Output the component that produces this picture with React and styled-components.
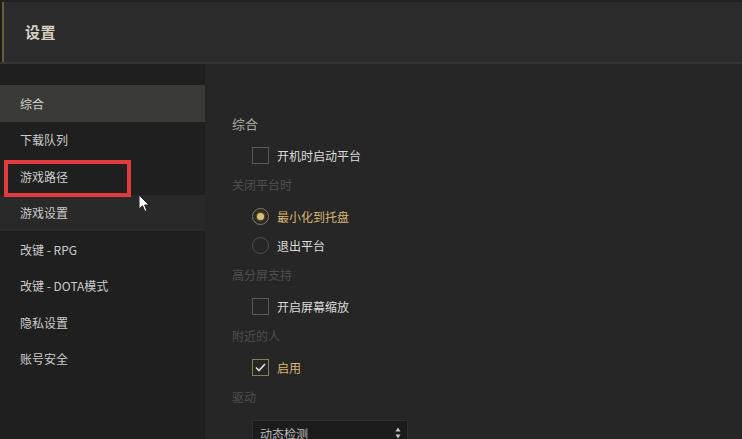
import React from "react";
import styled, { createGlobalStyle, css } from "styled-components";

const Global = createGlobalStyle`
  html, body { margin: 0; padding: 0; background: #262626; }
  body { font-family: "Noto Sans CJK SC", "Noto Sans", sans-serif; }
  * { box-sizing: border-box; }
`;

const Window = styled.div`
  position: relative;
  width: 742px;
  height: 439px;
  overflow: hidden;
  display: flex;
  flex-direction: column;
  background: #262626;
`;

const Header = styled.header`
  height: 64px;
  flex: none;
  display: flex;
  align-items: center;
  padding-left: 25px;
  padding-bottom: 2px;
  background: #2c2c2c;
  border-top: 2px solid #222;
  border-bottom: 2px solid #363636;
  box-shadow: inset 2px 0 #1c1c1c, inset 4px 0 #6b5a3b;
`;

const Title = styled.h1`
  margin: 0;
  font-size: 15px;
  font-weight: 700;
  color: #d6d0c2;
  letter-spacing: 0.5px;
`;

const Body = styled.div`
  flex: 1;
  display: flex;
  min-height: 0;
`;

const Sidebar = styled.nav`
  width: 205px;
  flex: none;
  background: #1f1f1f;
  padding-top: 21px;
  display: flex;
  flex-direction: column;
`;

const NavItem = styled.div`
  height: 36.5px;
  flex: none;
  display: flex;
  align-items: center;
  padding-left: 20px;
  font-size: 12px;
  color: #cbcbcb;
  ${(p) =>
    p.$active &&
    css`
      background: #3a3a36;
      color: #d2d2cc;
    `}
  ${(p) =>
    p.$hover &&
    css`
      background: #292929;
    `}
`;

const Main = styled.section`
  flex: 1;
  padding: 45px 0 0 27px;
  display: flex;
  flex-direction: column;
  overflow: hidden;
`;

const Heading = styled.div`
  height: 28px;
  flex: none;
  margin-bottom: 4px;
  display: flex;
  align-items: center;
  font-size: 13px;
  color: #b0aca4;
`;

const SectionLabel = styled.div`
  height: 28px;
  flex: none;
  margin-bottom: 4px;
  display: flex;
  align-items: center;
  font-size: 12px;
  color: #4f4f4f;
`;

const Option = styled.div`
  height: 29px;
  flex: none;
  display: flex;
  align-items: center;
  gap: 8px;
  padding-left: 20px;
  font-size: 12px;
  color: ${(p) => (p.$on ? "#d9b672" : "#dcdcdc")};
`;

const Box = styled.span`
  width: 17px;
  height: 17px;
  border: 1.5px solid ${(p) => (p.$on ? "#8c7c58" : "#595959")};
  display: flex;
  align-items: center;
  justify-content: center;
`;

const Radio = styled.span`
  width: 17px;
  height: 17px;
  border-radius: 50%;
  border: 1.5px solid ${(p) => (p.$on ? "#8c7c58" : "#4e4e4e")};
  display: flex;
  align-items: center;
  justify-content: center;
  &::after {
    content: "";
    width: 7px;
    height: 7px;
    border-radius: 50%;
    background: ${(p) => (p.$on ? "#e0bd70" : "transparent")};
    box-shadow: ${(p) => (p.$on ? "0 0 3px #b89a55" : "none")};
  }
`;

const Select = styled.div`
  margin: 6px 0 0 20px;
  width: 156px;
  height: 26px;
  flex: none;
  background: #1c1c1c;
  border: 1px solid #2f2f2f;
  display: flex;
  align-items: center;
  justify-content: space-between;
  padding: 0 6px 0 7px;
  font-size: 12px;
  color: #b8b8b8;
`;

const Annotation = styled.div`
  position: absolute;
  left: 4px;
  top: 160px;
  width: 127px;
  height: 37px;
  border: 4px solid #e13b3b;
  pointer-events: none;
`;

const Cursor = styled.svg`
  position: absolute;
  left: 138px;
  top: 194px;
`;

const Check = () => (
  <svg width="11" height="9" viewBox="0 0 11 9">
    <path d="M1 4.5 L4 7.5 L10 1" fill="none" stroke="#e6e2d8" strokeWidth="1.6" />
  </svg>
);

const SpinArrows = () => (
  <svg width="6" height="12" viewBox="0 0 6 12">
    <path d="M3 0.5 L5.5 4.5 L0.5 4.5 Z M3 11.5 L5.5 7.5 L0.5 7.5 Z" fill="#c4c4c4" />
  </svg>
);

const navItems = ["综合", "下载队列", "游戏路径", "游戏设置", "改键 - RPG", "改键 - DOTA模式", "隐私设置", "账号安全"];

export default function App() {
  return (
    <Window>
      <Global />
      <Header>
        <Title>设置</Title>
      </Header>
      <Body>
        <Sidebar>
          {navItems.map((t, i) => (
            <NavItem key={t} $active={i === 0} $hover={i === 3}>
              {t}
            </NavItem>
          ))}
        </Sidebar>
        <Main>
          <Heading>综合</Heading>
          <Option>
            <Box />
            开机时启动平台
          </Option>
          <SectionLabel>关闭平台时</SectionLabel>
          <Option $on>
            <Radio $on />
            最小化到托盘
          </Option>
          <Option>
            <Radio />
            退出平台
          </Option>
          <SectionLabel>高分屏支持</SectionLabel>
          <Option>
            <Box />
            开启屏幕缩放
          </Option>
          <SectionLabel>附近的人</SectionLabel>
          <Option $on>
            <Box $on>
              <Check />
            </Box>
            启用
          </Option>
          <SectionLabel>驱动</SectionLabel>
          <Select>
            动态检测
            <SpinArrows />
          </Select>
        </Main>
      </Body>
      <Annotation />
      <Cursor width="12" height="19" viewBox="0 0 12 19">
        <path d="M1 1 L1 15 L4.5 11.8 L7 17.5 L9 16.6 L6.6 11 L11 11 Z" fill="#fff" stroke="#222" strokeWidth="1" />
      </Cursor>
    </Window>
  );
}
